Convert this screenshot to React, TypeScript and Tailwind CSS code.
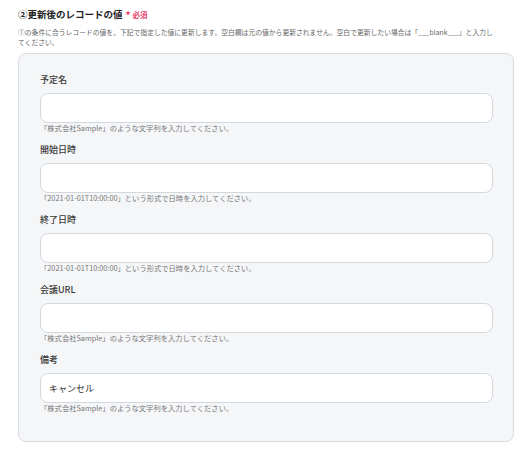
const fields = [
  { label: "予定名", hint: "「株式会社Sample」のような文字列を入力してください。", value: "" },
  { label: "開始日時", hint: "「2021-01-01T10:00:00」という形式で日時を入力してください。", value: "" },
  { label: "終了日時", hint: "「2021-01-01T10:00:00」という形式で日時を入力してください。", value: "" },
  { label: "会議URL", hint: "「株式会社Sample」のような文字列を入力してください。", value: "" },
  { label: "備考", hint: "「株式会社Sample」のような文字列を入力してください。", value: "キャンセル" },
];

const App = () => {
  return (
    <div className="min-h-screen bg-white pl-[18px] pr-[18px] pt-[7px] font-['Noto_Sans_CJK_JP',sans-serif] text-[#333]">
      {/* Section title */}
      <div className="flex h-[14px] items-center gap-[3px]">
        <h2 className="text-[9.5px] font-bold leading-[14px] text-[#222]">②更新後のレコードの値</h2>
        <span className="flex items-center gap-[2px] pt-[2px] text-[7.5px] font-bold text-[#e8426b]">
          <span className="text-[10px] leading-none">*</span>
          必須
        </span>
      </div>
      <p className="mt-[6px] w-[478px] text-[6.8px] leading-[10px] text-[#666]">
        ①の条件に合うレコードの値を、下記で指定した値に更新します。空白欄は元の値から更新されません。空白で更新したい場合は「___blank___」と入力してください。
      </p>

      {/* Field panel */}
      <div className="mt-[6px] w-[496px] rounded-[8px] border border-[#d6dae1] bg-[#f5f6f8] pb-[28px] pl-[21px] pr-[20px] pt-[18px]">
        <div className="flex flex-col gap-[9px]">
          {fields.map((f) => (
            <div key={f.label} className="flex flex-col">
              <label className="h-[16px] text-[9px] font-medium leading-[16px] text-[#3a3a3a]">{f.label}</label>
              <input
                readOnly
                value={f.value}
                className="mt-[5px] h-[30px] w-full rounded-[8px] border border-[#d3d8df] bg-white px-[8px] text-[9px] text-[#333] outline-none"
              />
              <p className="h-[10px] text-[7.3px] leading-[10px] text-[#777]">{f.hint}</p>
            </div>
          ))}
        </div>
      </div>
    </div>
  );
};

export default App;
